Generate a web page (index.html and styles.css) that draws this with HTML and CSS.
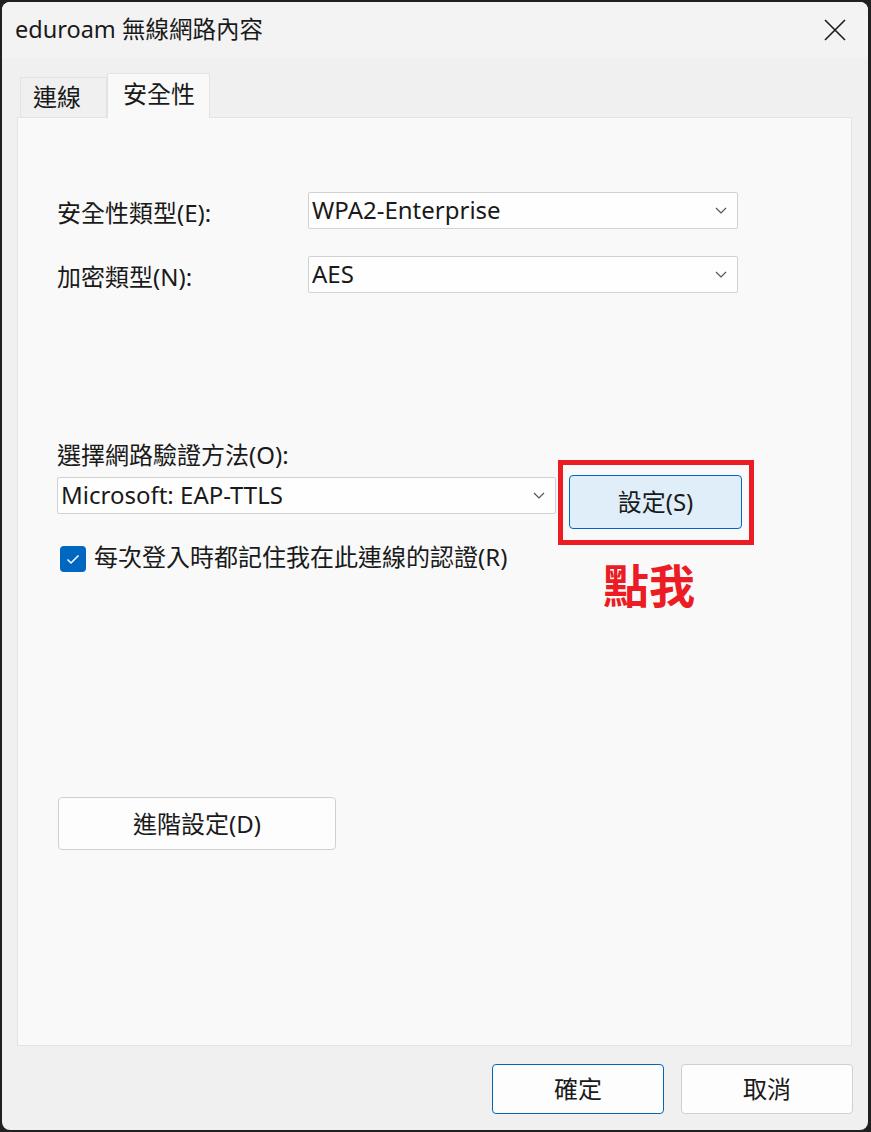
FILE: index.html
```html
<!DOCTYPE html>
<html lang="zh-Hant">
<head>
<meta charset="utf-8">
<title>eduroam 無線網路內容</title>
<link rel="stylesheet" href="styles.css">
</head>
<body>
<div class="window">
  <div class="titlebar">
    <div class="title">eduroam 無線網路內容</div>
    <button class="close" aria-label="關閉">
      <svg width="22" height="22" viewBox="0 0 22 22"><path d="M1 1 L21 21 M21 1 L1 21" stroke="#1b1b1b" stroke-width="1.6" fill="none"/></svg>
    </button>
  </div>
  <div class="tabs">
    <div class="tab">連線</div>
    <div class="tab active">安全性</div>
  </div>
  <div class="panel">
    <div class="field-row">
      <div class="label">安全性類型(E):</div>
      <div class="select wide">
        <span>WPA2-Enterprise</span>
        <svg class="chev" width="12" height="7" viewBox="0 0 12 7"><path d="M1 1 L6 6 L11 1" stroke="#555" stroke-width="1.2" fill="none"/></svg>
      </div>
    </div>
    <div class="field-row second">
      <div class="label">加密類型(N):</div>
      <div class="select wide">
        <span>AES</span>
        <svg class="chev" width="12" height="7" viewBox="0 0 12 7"><path d="M1 1 L6 6 L11 1" stroke="#555" stroke-width="1.2" fill="none"/></svg>
      </div>
    </div>

    <div class="method-label">選擇網路驗證方法(O):</div>
    <div class="method-row">
      <div class="select method">
        <span>Microsoft: EAP-TTLS</span>
        <svg class="chev" width="12" height="7" viewBox="0 0 12 7"><path d="M1 1 L6 6 L11 1" stroke="#555" stroke-width="1.2" fill="none"/></svg>
      </div>
      <div class="callout">
        <button class="btn accent-light">設定(S)</button>
        <span class="callout-frame"></span>
        <span class="callout-text">點我</span>
      </div>
    </div>

    <label class="check-row">
      <span class="checkbox">
        <svg width="14" height="11" viewBox="0 0 14 11"><path d="M1.5 5.5 L5 9 L12.5 1.5" stroke="#fff" stroke-width="1.5" fill="none"/></svg>
      </span>
      <span class="check-text">每次登入時都記住我在此連線的認證(R)</span>
    </label>

    <button class="btn advanced">進階設定(D)</button>
  </div>
  <div class="footer">
    <button class="btn dialog primary">確定</button>
    <button class="btn dialog">取消</button>
  </div>
</div>
</body>
</html>
```

FILE: styles.css
```css
* { box-sizing: border-box; }

html, body {
  margin: 0;
  padding: 0;
  background: #202020;
  width: 871px;
  height: 1132px;
  overflow: hidden;
}

body {
  font-family: "Noto Sans", "Noto Sans CJK TC", sans-serif;
  color: #1a1a1a;
  font-size: 24px;
  padding: 2px 3px 2px 2px;
}

.window {
  width: 866px;
  height: 1128px;
  border-radius: 8px;
  background: #f0f0f0;
  overflow: hidden;
  display: flex;
  flex-direction: column;
}

.titlebar {
  height: 56px;
  background: #f3f3f3;
  display: flex;
  align-items: center;
  justify-content: space-between;
  padding: 0 22px 0 13px;
}

.title {
  font-size: 23.5px;
  line-height: 30px;
  margin-top: -2px;
}

.close {
  border: 0;
  background: transparent;
  padding: 0;
  width: 22px;
  height: 22px;
  display: flex;
}

.tabs {
  margin-top: 15px;
  height: 44px;
  display: flex;
  align-items: flex-end;
  padding-left: 18px;
  position: relative;
  z-index: 1;
}

.tab {
  height: 40px;
  width: 87px;
  border: 1px solid #e3e3e3;
  border-bottom: 0;
  background: #f0f0f0;
  font-size: 24px;
  line-height: 38px;
  padding-left: 12px;
}

.tab.active {
  height: 45px;
  width: 103px;
  margin-bottom: -1px;
  background: #f9f9f9;
  padding-left: 15px;
  line-height: 40px;
  border-left: 1px solid #e3e3e3;
}

.panel {
  flex: 1;
  margin: 0 16px 0 15px;
  background: #f9f9f9;
  border: 1px solid #e3e3e3;
  padding: 74px 0 0 39px;
  display: flex;
  flex-direction: column;
  align-items: flex-start;
}

.field-row {
  display: flex;
  align-items: center;
  height: 37px;
}

.field-row.second {
  margin-top: 27px;
}

.label {
  width: 251px;
  line-height: 30px;
  padding-top: 5px;
}

.select {
  height: 37px;
  background: #fefefe;
  border: 1px solid #d1d1d1;
  border-radius: 2px;
  display: flex;
  align-items: center;
  justify-content: space-between;
  padding: 0 10px 0 3px;
  line-height: 30px;
}

.select span { margin-top: -2px; }

.select.wide { width: 430px; }
.select.method { width: 499px; margin-top: 2px; }

.chev { flex: none; }

.method-label {
  margin-top: 147px;
  line-height: 30px;
}

.method-row {
  display: flex;
  align-items: flex-start;
  gap: 13px;
  margin-top: 5px;
}

.btn {
  font-family: inherit;
  font-size: 24px;
  color: #1a1a1a;
  background: #fdfdfd;
  border: 1px solid #d0d0d0;
  border-radius: 4px;
  padding: 0;
  line-height: 30px;
}

.callout {
  position: relative;
}

.accent-light {
  width: 173px;
  height: 54px;
  background: #e0eef9;
  border-color: #0067c0;
}

.callout-frame {
  position: absolute;
  left: -11px;
  top: -15px;
  width: 196px;
  height: 85px;
  border: 5px solid #ec1c24;
  pointer-events: none;
}

.callout-text {
  position: absolute;
  left: 34px;
  top: 78px;
  font-family: "Noto Sans CJK TC", sans-serif;
  font-weight: 700;
  font-size: 46px;
  line-height: 60px;
  color: #ec1c24;
  white-space: nowrap;
}

.check-row {
  display: flex;
  align-items: center;
  margin-top: 17px;
  margin-left: 3px;
}

.checkbox {
  width: 26px;
  height: 26px;
  border-radius: 4px;
  background: #0067c0;
  display: flex;
  align-items: center;
  justify-content: center;
}

.check-text {
  margin-left: 8px;
  line-height: 30px;
  margin-top: -4px;
}

.advanced {
  margin-top: 225px;
  margin-left: 1px;
  width: 278px;
  height: 53px;
}

.footer {
  height: 84px;
  display: flex;
  justify-content: flex-end;
  align-items: flex-start;
  gap: 17px;
  padding: 18px 15px 0 0;
}

.dialog {
  width: 172px;
  height: 50px;
}

.dialog.primary {
  border-color: #0067c0;
}
```
